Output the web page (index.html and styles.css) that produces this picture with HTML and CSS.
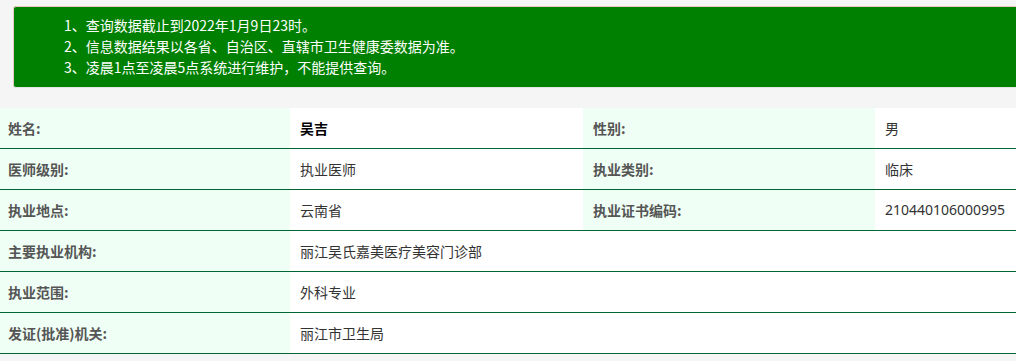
FILE: index.html
```html
<!DOCTYPE html>
<html lang="zh-CN">
<head>
<meta charset="utf-8">
<title>执业医师查询</title>
<link rel="stylesheet" href="styles.css">
</head>
<body>
<div class="page">
  <div class="notice">
    <p>1、查询数据截止到2022年1月9日23时。</p>
    <p>2、信息数据结果以各省、自治区、直辖市卫生健康委数据为准。</p>
    <p>3、凌晨1点至凌晨5点系统进行维护，不能提供查询。</p>
  </div>
  <div class="table">
    <div class="row">
      <div class="cell label first">姓名:</div>
      <div class="cell value strong">吴吉</div>
      <div class="cell label">性别:</div>
      <div class="cell value">男</div>
    </div>
    <div class="row">
      <div class="cell label first">医师级别:</div>
      <div class="cell value">执业医师</div>
      <div class="cell label">执业类别:</div>
      <div class="cell value">临床</div>
    </div>
    <div class="row">
      <div class="cell label first">执业地点:</div>
      <div class="cell value">云南省</div>
      <div class="cell label">执业证书编码:</div>
      <div class="cell value num">210440106000995</div>
    </div>
    <div class="row">
      <div class="cell label first">主要执业机构:</div>
      <div class="cell value wide">丽江吴氏嘉美医疗美容门诊部</div>
    </div>
    <div class="row">
      <div class="cell label first">执业范围:</div>
      <div class="cell value wide">外科专业</div>
    </div>
    <div class="row">
      <div class="cell label first">发证(批准)机关:</div>
      <div class="cell value wide">丽江市卫生局</div>
    </div>
  </div>
</div>
</body>
</html>
```

FILE: styles.css
```css
html, body {
  margin: 0;
  padding: 0;
  background: #f5f5f5;
  overflow-x: hidden;
}

body {
  font-family: "Noto Sans CJK SC", "Noto Sans", sans-serif;
  font-size: 14px;
  color: #333;
}

.page {
  padding-top: 6px;
}

.notice {
  margin: 0 -20px 0 13px;
  padding: 8px 0 9px 50px;
  background: #008000;
  border: 1px solid #e9c7c2;
  border-bottom-color: #e6e6e6;
  border-radius: 3px;
  color: #fff;
}

.notice p {
  margin: 0;
  line-height: 21px;
}

.table {
  margin-top: 20px;
}

.row {
  display: grid;
  grid-template-columns: 290px 293px 292px 1fr;
  border-bottom: 1px solid #006633;
  background: #fff;
}

.cell {
  height: 40px;
  line-height: 40px;
  padding: 0 10px;
  white-space: nowrap;
}

.label {
  background: #f0fff6;
  color: #555;
  font-weight: bold;
}

.label.first {
  padding-left: 8px;
}

.value {
  color: #333;
}

.value.num {
  font-family: "Noto Sans", "Noto Sans CJK SC", sans-serif;
}

.value.strong {
  color: #000;
  font-weight: bold;
}

.value.wide {
  grid-column: 2 / 5;
}
```
